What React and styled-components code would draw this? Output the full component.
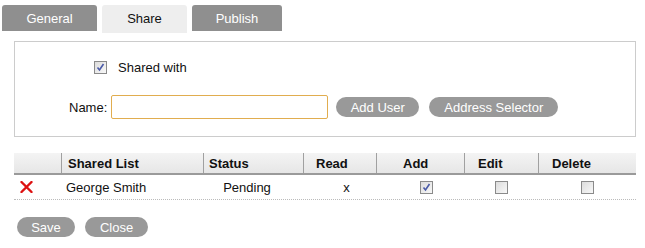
import React from "react"
import styled, { createGlobalStyle } from "styled-components"

const Global = createGlobalStyle`
  body {
    margin: 0;
    background: #fff;
    font-family: "Liberation Sans", Arial, sans-serif;
    font-size: 13px;
    color: #111;
  }
`

const Page = styled.div`
  padding: 5px 0 0 2px;
  width: 645px;
  height: 248px;
  box-sizing: border-box;
`

const Tabs = styled.div`
  display: flex;
  gap: 5px;
  height: 28px;
  align-items: flex-start;
`

const Tab = styled.div`
  width: ${p => p.w}px;
  height: ${p => (p.active ? 28 : 26)}px;
  display: flex;
  align-items: center;
  justify-content: center;
  padding-bottom: ${p => (p.active ? 2 : 0)}px;
  box-sizing: border-box;
  border-radius: 3px 3px 0 0;
  background: ${p => (p.active ? "#eeeeee" : "#8f8f8f")};
  color: ${p => (p.active ? "#111" : "#fff")};
  font-size: 13px;
`

const Panel = styled.div`
  margin: 8px 0 0 12px;
  width: 622px;
  height: 96px;
  box-sizing: border-box;
  border: 1px solid #cccccc;
  padding-top: 17px;
`

const CheckRow = styled.label`
  display: flex;
  align-items: center;
  gap: 11px;
  margin-left: 79px;
  height: 16px;
`

const NameRow = styled.div`
  display: flex;
  align-items: center;
  margin: 20px 0 0 54px;
  height: 24px;
`

const Label = styled.span`
  margin-right: 4px;
`

const Input = styled.input`
  width: 217px;
  height: 24px;
  box-sizing: border-box;
  border: 1px solid #e1ad4f;
  border-radius: 2px;
  outline: none;
  margin-right: 8px;
  font-family: inherit;
`

const Pill = styled.button`
  height: 20px;
  width: ${p => p.w}px;
  border: none;
  border-radius: 10px;
  background: #999999;
  color: #fff;
  font-family: "Liberation Sans", Arial, sans-serif;
  font-size: 13px;
  padding: 0;
  margin-right: ${p => p.gap || 0}px;
  display: flex;
  align-items: center;
  justify-content: center;
`

const Table = styled.div`
  margin: 16px 0 0 12px;
  width: 622px;
`

const cols = [47, 142, 100, 73, 88, 74, 98]

const Row = styled.div`
  display: grid;
  grid-template-columns: ${cols.map(c => c + "px").join(" ")};
  height: ${p => (p.head ? 20 : 24)}px;
  box-sizing: content-box;
  ${p =>
    p.head
      ? `background: linear-gradient(#f4f4f4, #e6e6e6);
         border-bottom: 2px solid #9a9a9a;`
      : `border-bottom: 1px dotted #bbbbbb;`}
`

const Head = styled.div`
  display: flex;
  align-items: center;
  font-weight: bold;
  font-size: 13px;
  padding-left: ${p => p.pad || 0}px;
  border-left: ${p => (p.first ? "none" : "1px solid #a0a0a0")};
`

const Cell = styled.div`
  display: flex;
  align-items: center;
  justify-content: ${p => (p.left ? "flex-start" : "center")};
  padding-left: ${p => p.pad || 0}px;
  padding-right: ${p => p.pr || 0}px;
`

const Box = styled.span`
  display: inline-flex;
  align-items: center;
  justify-content: center;
  width: 13px;
  height: 13px;
  box-sizing: border-box;
  border: 1px solid #8a8a8a;
  background: linear-gradient(135deg, #dcdcdc, #f8f8f8);
`

const Check = ({ on }) => (
  <Box>
    {on && (
      <svg width="9" height="9" viewBox="0 0 9 9">
        <path d="M1.5 4.5 L3.5 7 L7.5 1" fill="none" stroke="#4a5aa8" strokeWidth="1.6" />
      </svg>
    )}
  </Box>
)

const RedX = () => (
  <svg width="13" height="12" viewBox="0 0 13 12">
    <path d="M1.5 1 L11.5 11 M11.5 1 L1.5 11" stroke="#dd1111" strokeWidth="2.4" strokeLinecap="round" />
  </svg>
)

const Footer = styled.div`
  display: flex;
  margin: 17px 0 0 15px;
`

export default function App() {
  return (
    <Page>
      <Global />
      <Tabs>
        <Tab w={95}>General</Tab>
        <Tab w={85} active>Share</Tab>
        <Tab w={90}>Publish</Tab>
      </Tabs>
      <Panel>
        <CheckRow>
          <Check on />
          <span>Shared with</span>
        </CheckRow>
        <NameRow>
          <Label>Name:</Label>
          <Input />
          <Pill w={83} gap={10}>Add User</Pill>
          <Pill w={129}>Address Selector</Pill>
        </NameRow>
      </Panel>
      <Table>
        <Row head>
          <Head first />
          <Head pad={6}>Shared List</Head>
          <Head pad={5}>Status</Head>
          <Head pad={12}>Read</Head>
          <Head pad={26}>Add</Head>
          <Head pad={13}>Edit</Head>
          <Head pad={13}>Delete</Head>
        </Row>
        <Row>
          <Cell left pad={6}><RedX /></Cell>
          <Cell left pad={5}>George Smith</Cell>
          <Cell pr={12}>Pending</Cell>
          <Cell pad={14}>x</Cell>
          <Cell pad={13}><Check on /></Cell>
          <Cell><Check /></Cell>
          <Cell><Check /></Cell>
        </Row>
      </Table>
      <Footer>
        <Pill w={58} gap={10}>Save</Pill>
        <Pill w={63}>Close</Pill>
      </Footer>
    </Page>
  )
}
